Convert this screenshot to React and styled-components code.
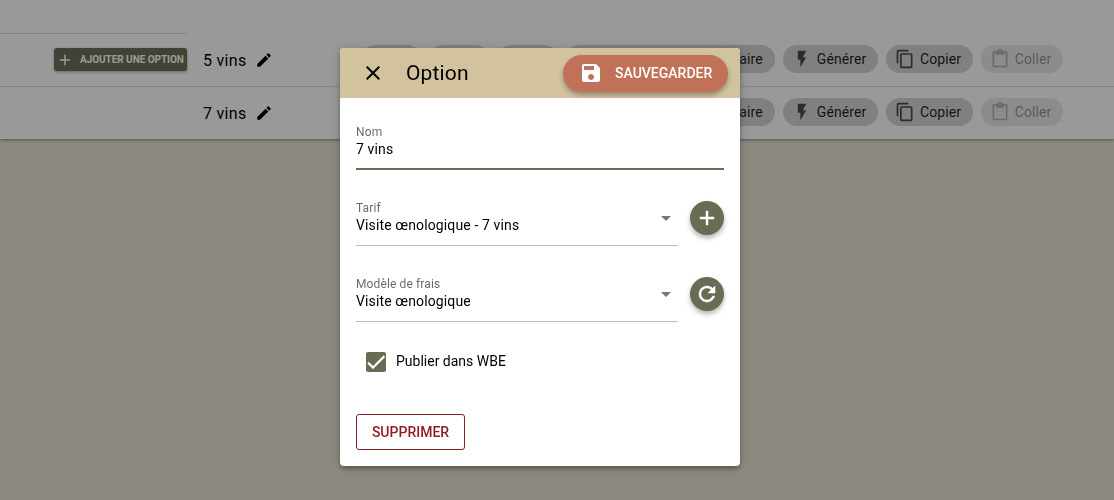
import React from 'react';
import styled, { createGlobalStyle } from 'styled-components';
import {
  MdAdd, MdClose, MdSave, MdEdit, MdFlashOn, MdContentCopy, MdContentPaste,
  MdArrowDropDown,
} from 'react-icons/md';

const Global = createGlobalStyle`
  html, body { margin: 0; height: 100%; }
  body { background: #ede4d6; font-family: Roboto, "Liberation Sans", sans-serif; overflow: hidden; }
  * { box-sizing: border-box; }
`;

const Page = styled.div`
  width: 1114px;
  height: 500px;
  background: #ede4d6;
`;

const Panel = styled.section`
  background: #fff;
  padding-top: 33px;
  box-shadow: 0 1px 3px rgba(0, 0, 0, 0.4);
`;

const Row = styled.div`
  display: flex;
  height: ${(p) => (p.$last ? 52 : 54)}px;
  padding-bottom: ${(p) => (p.$last ? 2 : 1)}px;
  border-bottom: ${(p) => (p.$last ? 'none' : '1px solid #e0e0e0')};
`;

const LeftCell = styled.div`
  width: 187px;
  flex: none;
  display: flex;
  justify-content: flex-end;
  align-items: flex-start;
  padding-top: 14px;
  border-top: ${(p) => (p.$line ? '1px solid #e0e0e0' : 'none')};
`;

const AddOption = styled.button`
  width: 133px;
  height: 23px;
  padding: 0 0 0 2px;
  border: 0;
  border-radius: 3px;
  background: #6a7159;
  color: #fff;
  display: flex;
  align-items: center;
  gap: 6px;
  font: 700 10px/1 Roboto, sans-serif;
  letter-spacing: -0.05px;
  white-space: nowrap;
  box-shadow: 0 1px 3px rgba(0, 0, 0, 0.35);
  svg { width: 18px; height: 18px; flex: none; }
`;

const OptionName = styled.div`
  margin-left: 16px;
  padding-top: 2px;
  display: flex;
  align-items: center;
  gap: 8px;
  font-size: 16px;
  color: #000;
  letter-spacing: 0.3px;
  svg { width: 18px; height: 18px; }
`;

const Chips = styled.div`
  margin-left: auto;
  padding-right: 51px;
  display: flex;
  align-items: center;
  gap: 8px;
`;

const Chip = styled.div`
  height: 28px;
  width: ${(p) => (p.$w ? `${p.$w}px` : 'auto')};
  padding: 0 ${(p) => (p.$w ? 12 : 11.6)}px 0 9px;
  border-radius: 14px;
  display: flex;
  align-items: center;
  justify-content: ${(p) => (p.$w ? 'flex-end' : 'flex-start')};
  gap: 5px;
  font-size: 14px;
  letter-spacing: 0.1px;
  color: rgba(0, 0, 0, ${(p) => (p.$off ? 0.4 : 0.87)});
  background: ${(p) => (p.$off ? '#eaeaea' : '#d6d6d6')};
  white-space: nowrap;
  svg { width: 20px; height: 20px; flex: none; opacity: ${(p) => (p.$off ? 0.6 : 0.75)}; }
`;

const Scrim = styled.div`
  position: fixed;
  inset: 0;
  background: rgba(0, 0, 0, 0.4);
  display: flex;
  justify-content: center;
  align-items: flex-start;
  padding: 48px 34px 0 0;
`;

const Modal = styled.div`
  width: 400px;
  height: 418px;
  background: #fff;
  border-radius: 4px;
  overflow: hidden;
  box-shadow: 0 3px 5px rgba(0, 0, 0, 0.3), 0 1px 14px rgba(0, 0, 0, 0.15);
  display: flex;
  flex-direction: column;
`;

const Header = styled.header`
  height: 50px;
  flex: none;
  background: #d2c29e;
  display: flex;
  align-items: center;
  padding: 0 12px 0 21px;
`;

const CloseIcon = styled(MdClose)`
  width: 24px;
  height: 24px;
  color: #000;
  flex: none;
`;

const Title = styled.h2`
  margin: 0 0 0 21px;
  font-size: 21px;
  font-weight: 400;
  letter-spacing: 0.15px;
  color: #000;
`;

const SaveButton = styled.button`
  margin-left: auto;
  width: 165px;
  height: 37px;
  border: 0;
  border-radius: 19px;
  background: #c07157;
  color: #fff;
  display: flex;
  align-items: center;
  padding: 0 0 0 16px;
  gap: 12px;
  font: 500 14px/1 Roboto, sans-serif;
  box-shadow: 0 3px 5px rgba(0, 0, 0, 0.3);
  svg { width: 24px; height: 24px; flex: none; }
`;

const Body = styled.div`
  flex: 1;
  padding: 28px 16px 16px;
  display: flex;
  flex-direction: column;
`;

const Field = styled.div`
  height: ${(p) => p.$h}px;
  padding-top: ${(p) => p.$pt || 0}px;
  border-bottom: ${(p) => (p.$focus ? '2px solid #666d54' : '1px solid #bdbdbd')};
  position: relative;
  flex: 1;
`;

const Label = styled.div`
  font-size: 12px;
  line-height: 12px;
  letter-spacing: 0.12px;
  color: rgba(0, 0, 0, 0.6);
  margin-bottom: 1px;
`;

const Value = styled.div`
  font-size: 14px;
  line-height: 20px;
  color: #000;
  letter-spacing: 0.13px;
`;

const Caret = styled(MdArrowDropDown)`
  position: absolute;
  right: 0;
  top: 5px;
  width: 24px;
  height: 24px;
  color: #757575;
`;

const SelectRow = styled.div`
  display: flex;
  align-items: flex-start;
  gap: 12px;
  margin-top: 31px;
`;

const RoundButton = styled.button`
  width: 34px;
  height: 34px;
  border: 0;
  padding: 0;
  border-radius: 50%;
  background: #666d54;
  color: #fff;
  display: flex;
  align-items: center;
  justify-content: center;
  box-shadow: 0 3px 5px rgba(0, 0, 0, 0.3);
  flex: none;
`;

const BoldSvg = styled.svg`
  width: 24px;
  height: 24px;
  flex: none;
  fill: currentColor;
  stroke: currentColor;
  stroke-width: ${(p) => p.$weight}px;
`;

const BoldIcon = ({ d, weight = 0.5 }) => (
  <BoldSvg viewBox="0 0 24 24" $weight={weight}><path d={d} /></BoldSvg>
);

const PLUS = 'M19 13h-6v6h-2v-6H5v-2h6V5h2v6h6v2z';
const REFRESH = 'M17.65 6.35C16.2 4.9 14.21 4 12 4c-4.42 0-7.99 3.58-7.99 8s3.57 8 7.99 8c3.73 0 6.84-2.55 7.73-6h-2.08c-.82 2.33-3.04 4-5.65 4-3.31 0-6-2.69-6-6s2.69-6 6-6c1.66 0 3.14.69 4.22 1.78L13 11h7V4l-2.35 2.35z';
const CHECK = 'M9 16.17L4.83 12l-1.41 1.41L9 19 21 7l-1.41-1.41z';

const CheckRow = styled.label`
  display: flex;
  align-items: flex-start;
  gap: 10px;
  margin: 30px 0 0 10px;
  font-size: 14px;
  line-height: 18px;
  color: #000;
`;

const CheckBox = styled.span`
  width: 20px;
  height: 20px;
  border-radius: 2px;
  background: #666d54;
  color: #fff;
  display: flex;
  align-items: center;
  justify-content: center;
`;

const DeleteButton = styled.button`
  width: 109px;
  height: 36px;
  margin-top: 42px;
  background: #fff;
  border: 1px solid #8f1a1f;
  border-radius: 3px;
  color: #8f1a1f;
  font: 500 14px/1 Roboto, sans-serif;
  padding: 0;
`;

const RowChips = () => (
  <Chips>
    <Chip $w={60} />
    <Chip $w={60} />
    <Chip $w={61} />
    <Chip $w={209}>Commentaire</Chip>
    <Chip><MdFlashOn />Générer</Chip>
    <Chip><MdContentCopy />Copier</Chip>
    <Chip $off><MdContentPaste />Coller</Chip>
  </Chips>
);

export default function App() {
  return (
    <Page>
      <Global />
      <Panel>
        <Row>
          <LeftCell $line>
            <AddOption><MdAdd />AJOUTER UNE OPTION</AddOption>
          </LeftCell>
          <OptionName>5 vins <MdEdit /></OptionName>
          <RowChips />
        </Row>
        <Row $last>
          <LeftCell />
          <OptionName>7 vins <MdEdit /></OptionName>
          <RowChips />
        </Row>
      </Panel>
      <Scrim>
        <Modal>
          <Header>
            <CloseIcon />
            <Title>Option</Title>
            <SaveButton><MdSave />SAUVEGARDER</SaveButton>
          </Header>
          <Body>
            <Field $h={44} $focus>
              <Label>Nom</Label>
              <Value>7 vins</Value>
            </Field>
            <SelectRow>
              <Field $h={45} $pt={1}>
                <Label>Tarif</Label>
                <Value>Visite œnologique - 7 vins</Value>
                <Caret />
              </Field>
              <RoundButton><BoldIcon d={PLUS} /></RoundButton>
            </SelectRow>
            <SelectRow>
              <Field $h={45} $pt={1}>
                <Label>Modèle de frais</Label>
                <Value>Visite œnologique</Value>
                <Caret />
              </Field>
              <RoundButton><BoldIcon d={REFRESH} /></RoundButton>
            </SelectRow>
            <CheckRow>
              <CheckBox><BoldIcon d={CHECK} weight={0.3} /></CheckBox>
              Publier dans WBE
            </CheckRow>
            <DeleteButton>SUPPRIMER</DeleteButton>
          </Body>
        </Modal>
      </Scrim>
    </Page>
  );
}
